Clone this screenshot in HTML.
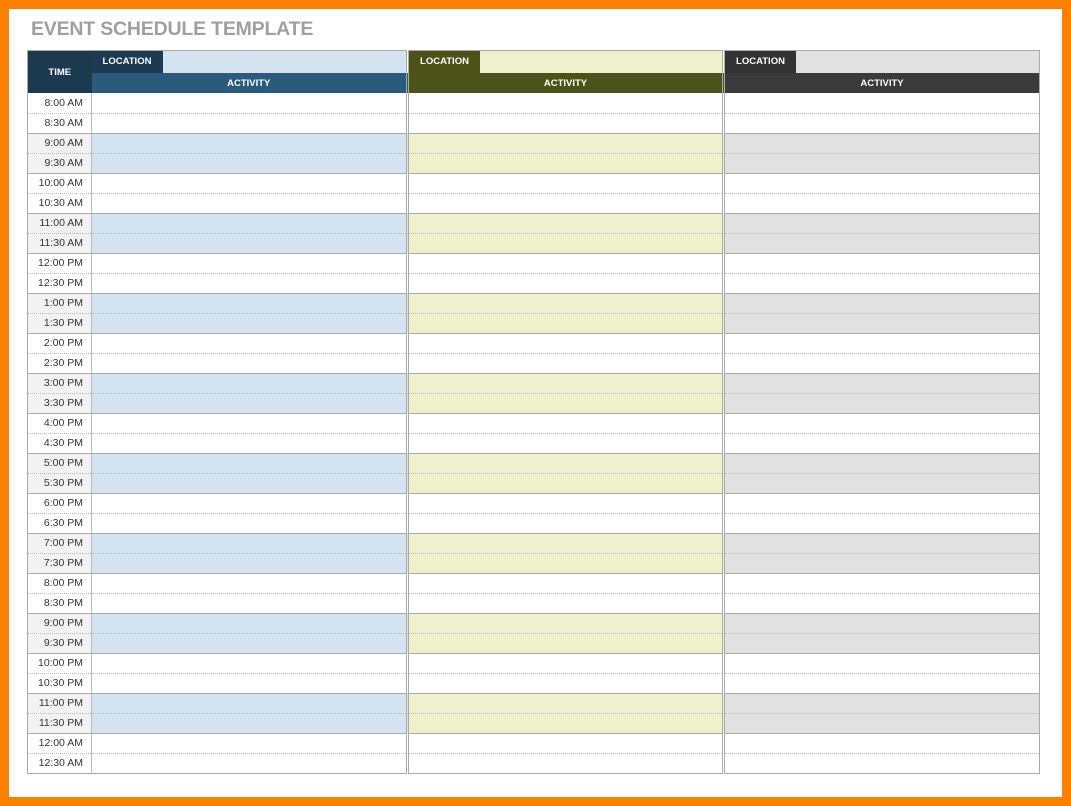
<!DOCTYPE html>
<html><head><meta charset="utf-8"><style>
*{margin:0;padding:0;box-sizing:border-box}
html,body{width:1071px;height:806px;overflow:hidden}
body{background:#fe8000;position:relative;font-family:"Liberation Sans",sans-serif}
#pg{position:absolute;left:9px;top:9px;width:1053px;height:788px;background:#fff}
h1{position:absolute;left:31px;top:18px;font-size:19.5px;font-weight:bold;color:#a0a0a0;letter-spacing:-0.2px}
table{position:absolute;left:27px;top:50px;width:1012px;border-collapse:collapse;table-layout:fixed;border:1px solid #aaa}
td,th{height:20px;padding:0;font-size:10.5px}
th{color:#fff;font-weight:bold;font-size:9.5px}
.t{background:#1c3a4f;width:64px}
.c2,.c3{border-left:3px double #aaa}
td.tm{text-align:right;padding-right:8px;color:#333;border-right:1px solid #bbb}
tr.d td{border-bottom:1px dotted #bbb}
tr.e td{border-bottom:1px solid #aaa}
tr.s td.tm{background:#f2f2f2}
tr.s td.a{background:#d3e3f0}
tr.s td.b{background:#eef1cc}
tr.s td.c{background:#e1e1e1}
</style></head><body><div id="pg"></div>
<h1>EVENT SCHEDULE TEMPLATE</h1>
<table>
<colgroup><col style="width:64px"><col style="width:316px"><col style="width:316px"><col style="width:316px"></colgroup>
<tr><th rowspan="2" class="t" style="height:42px">TIME</th>
<th style="height:22px;padding:0"><div style="display:flex;height:22px"><div style="width:71px;background:#1c3a52;line-height:22px">LOCATION</div><div style="flex:1;background:#d3e3f0"></div></div></th>
<th class="c2" style="height:22px"><div style="display:flex;height:22px"><div style="width:71px;background:#4a5218;line-height:22px">LOCATION</div><div style="flex:1;background:#eef1cc"></div></div></th>
<th class="c3" style="height:22px"><div style="display:flex;height:22px"><div style="width:71px;background:#333;line-height:22px">LOCATION</div><div style="flex:1;background:#e1e1e1"></div></div></th></tr>
<tr><th style="background:#2a5b7c;height:20px">ACTIVITY</th><th class="c2" style="background:#4b5418">ACTIVITY</th><th class="c3" style="background:#3a3a3a">ACTIVITY</th></tr>
<tr class="d"><td class="tm">8:00 AM</td><td class="a"></td><td class="b c2"></td><td class="c c3"></td></tr>
<tr class="e"><td class="tm">8:30 AM</td><td class="a"></td><td class="b c2"></td><td class="c c3"></td></tr>
<tr class="d s"><td class="tm">9:00 AM</td><td class="a"></td><td class="b c2"></td><td class="c c3"></td></tr>
<tr class="e s"><td class="tm">9:30 AM</td><td class="a"></td><td class="b c2"></td><td class="c c3"></td></tr>
<tr class="d"><td class="tm">10:00 AM</td><td class="a"></td><td class="b c2"></td><td class="c c3"></td></tr>
<tr class="e"><td class="tm">10:30 AM</td><td class="a"></td><td class="b c2"></td><td class="c c3"></td></tr>
<tr class="d s"><td class="tm">11:00 AM</td><td class="a"></td><td class="b c2"></td><td class="c c3"></td></tr>
<tr class="e s"><td class="tm">11:30 AM</td><td class="a"></td><td class="b c2"></td><td class="c c3"></td></tr>
<tr class="d"><td class="tm">12:00 PM</td><td class="a"></td><td class="b c2"></td><td class="c c3"></td></tr>
<tr class="e"><td class="tm">12:30 PM</td><td class="a"></td><td class="b c2"></td><td class="c c3"></td></tr>
<tr class="d s"><td class="tm">1:00 PM</td><td class="a"></td><td class="b c2"></td><td class="c c3"></td></tr>
<tr class="e s"><td class="tm">1:30 PM</td><td class="a"></td><td class="b c2"></td><td class="c c3"></td></tr>
<tr class="d"><td class="tm">2:00 PM</td><td class="a"></td><td class="b c2"></td><td class="c c3"></td></tr>
<tr class="e"><td class="tm">2:30 PM</td><td class="a"></td><td class="b c2"></td><td class="c c3"></td></tr>
<tr class="d s"><td class="tm">3:00 PM</td><td class="a"></td><td class="b c2"></td><td class="c c3"></td></tr>
<tr class="e s"><td class="tm">3:30 PM</td><td class="a"></td><td class="b c2"></td><td class="c c3"></td></tr>
<tr class="d"><td class="tm">4:00 PM</td><td class="a"></td><td class="b c2"></td><td class="c c3"></td></tr>
<tr class="e"><td class="tm">4:30 PM</td><td class="a"></td><td class="b c2"></td><td class="c c3"></td></tr>
<tr class="d s"><td class="tm">5:00 PM</td><td class="a"></td><td class="b c2"></td><td class="c c3"></td></tr>
<tr class="e s"><td class="tm">5:30 PM</td><td class="a"></td><td class="b c2"></td><td class="c c3"></td></tr>
<tr class="d"><td class="tm">6:00 PM</td><td class="a"></td><td class="b c2"></td><td class="c c3"></td></tr>
<tr class="e"><td class="tm">6:30 PM</td><td class="a"></td><td class="b c2"></td><td class="c c3"></td></tr>
<tr class="d s"><td class="tm">7:00 PM</td><td class="a"></td><td class="b c2"></td><td class="c c3"></td></tr>
<tr class="e s"><td class="tm">7:30 PM</td><td class="a"></td><td class="b c2"></td><td class="c c3"></td></tr>
<tr class="d"><td class="tm">8:00 PM</td><td class="a"></td><td class="b c2"></td><td class="c c3"></td></tr>
<tr class="e"><td class="tm">8:30 PM</td><td class="a"></td><td class="b c2"></td><td class="c c3"></td></tr>
<tr class="d s"><td class="tm">9:00 PM</td><td class="a"></td><td class="b c2"></td><td class="c c3"></td></tr>
<tr class="e s"><td class="tm">9:30 PM</td><td class="a"></td><td class="b c2"></td><td class="c c3"></td></tr>
<tr class="d"><td class="tm">10:00 PM</td><td class="a"></td><td class="b c2"></td><td class="c c3"></td></tr>
<tr class="e"><td class="tm">10:30 PM</td><td class="a"></td><td class="b c2"></td><td class="c c3"></td></tr>
<tr class="d s"><td class="tm">11:00 PM</td><td class="a"></td><td class="b c2"></td><td class="c c3"></td></tr>
<tr class="e s"><td class="tm">11:30 PM</td><td class="a"></td><td class="b c2"></td><td class="c c3"></td></tr>
<tr class="d"><td class="tm">12:00 AM</td><td class="a"></td><td class="b c2"></td><td class="c c3"></td></tr>
<tr class="e"><td class="tm">12:30 AM</td><td class="a"></td><td class="b c2"></td><td class="c c3"></td></tr>
</table>
</body></html>
